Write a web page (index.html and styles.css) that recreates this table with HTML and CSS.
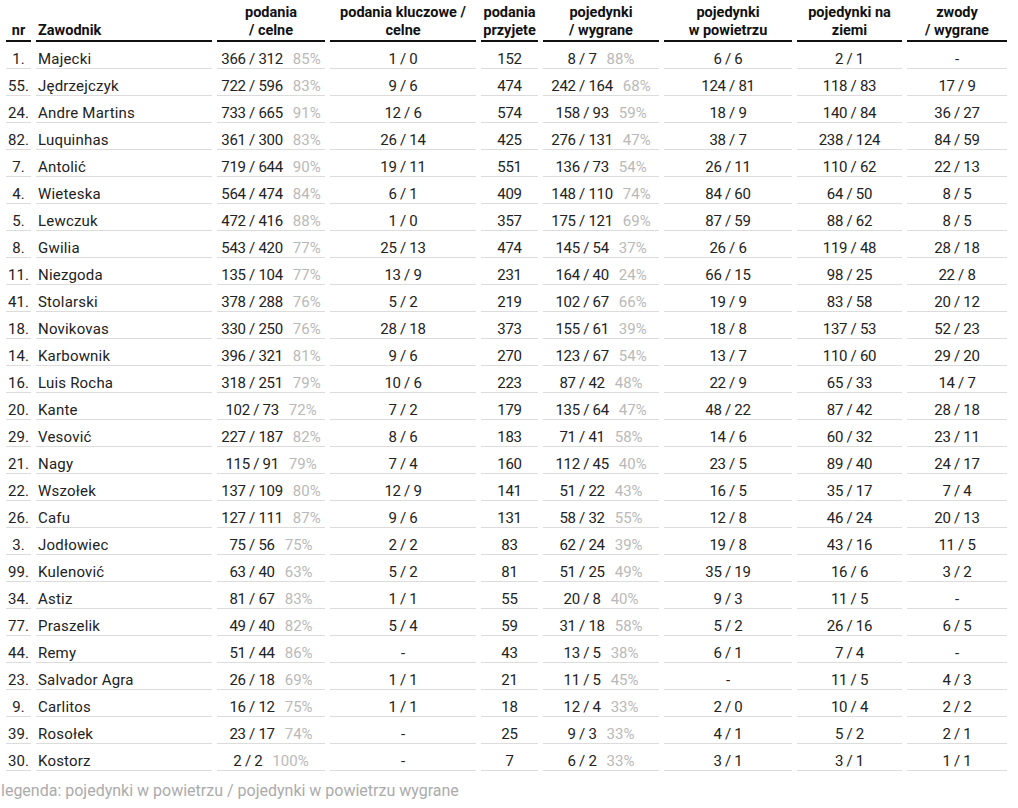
FILE: index.html
```html
<!DOCTYPE html>
<html lang="pl">
<head>
<meta charset="utf-8">
<title>Statystyki zawodników</title>
<link rel="stylesheet" href="styles.css">
</head>
<body>
<div class="page">
<table class="stats">
<colgroup>
<col class="c-nr"><col class="c-name"><col class="c-pass"><col class="c-key"><col class="c-rec"><col class="c-duel"><col class="c-air"><col class="c-ground"><col class="c-drib">
</colgroup>
<thead>
<tr>
<th class="nr">nr</th>
<th class="name">Zawodnik</th>
<th>podania<br>/ celne</th>
<th>podania kluczowe /<br>celne</th>
<th>podania<br>przyjete</th>
<th>pojedynki<br>/ wygrane</th>
<th>pojedynki<br>w powietrzu</th>
<th>pojedynki na<br>ziemi</th>
<th>zwody<br>/ wygrane</th>
</tr>
</thead>
<tbody>
<tr><td class="nr">1.</td><td class="name">Majecki</td><td>366 / 312<span class="pct">85%</span></td><td>1 / 0</td><td>152</td><td>8 / 7<span class="pct">88%</span></td><td>6 / 6</td><td>2 / 1</td><td>-</td></tr>
<tr><td class="nr">55.</td><td class="name">Jędrzejczyk</td><td>722 / 596<span class="pct">83%</span></td><td>9 / 6</td><td>474</td><td>242 / 164<span class="pct">68%</span></td><td>124 / 81</td><td>118 / 83</td><td>17 / 9</td></tr>
<tr><td class="nr">24.</td><td class="name">Andre Martins</td><td>733 / 665<span class="pct">91%</span></td><td>12 / 6</td><td>574</td><td>158 / 93<span class="pct">59%</span></td><td>18 / 9</td><td>140 / 84</td><td>36 / 27</td></tr>
<tr><td class="nr">82.</td><td class="name">Luquinhas</td><td>361 / 300<span class="pct">83%</span></td><td>26 / 14</td><td>425</td><td>276 / 131<span class="pct">47%</span></td><td>38 / 7</td><td>238 / 124</td><td>84 / 59</td></tr>
<tr><td class="nr">7.</td><td class="name">Antolić</td><td>719 / 644<span class="pct">90%</span></td><td>19 / 11</td><td>551</td><td>136 / 73<span class="pct">54%</span></td><td>26 / 11</td><td>110 / 62</td><td>22 / 13</td></tr>
<tr><td class="nr">4.</td><td class="name">Wieteska</td><td>564 / 474<span class="pct">84%</span></td><td>6 / 1</td><td>409</td><td>148 / 110<span class="pct">74%</span></td><td>84 / 60</td><td>64 / 50</td><td>8 / 5</td></tr>
<tr><td class="nr">5.</td><td class="name">Lewczuk</td><td>472 / 416<span class="pct">88%</span></td><td>1 / 0</td><td>357</td><td>175 / 121<span class="pct">69%</span></td><td>87 / 59</td><td>88 / 62</td><td>8 / 5</td></tr>
<tr><td class="nr">8.</td><td class="name">Gwilia</td><td>543 / 420<span class="pct">77%</span></td><td>25 / 13</td><td>474</td><td>145 / 54<span class="pct">37%</span></td><td>26 / 6</td><td>119 / 48</td><td>28 / 18</td></tr>
<tr><td class="nr">11.</td><td class="name">Niezgoda</td><td>135 / 104<span class="pct">77%</span></td><td>13 / 9</td><td>231</td><td>164 / 40<span class="pct">24%</span></td><td>66 / 15</td><td>98 / 25</td><td>22 / 8</td></tr>
<tr><td class="nr">41.</td><td class="name">Stolarski</td><td>378 / 288<span class="pct">76%</span></td><td>5 / 2</td><td>219</td><td>102 / 67<span class="pct">66%</span></td><td>19 / 9</td><td>83 / 58</td><td>20 / 12</td></tr>
<tr><td class="nr">18.</td><td class="name">Novikovas</td><td>330 / 250<span class="pct">76%</span></td><td>28 / 18</td><td>373</td><td>155 / 61<span class="pct">39%</span></td><td>18 / 8</td><td>137 / 53</td><td>52 / 23</td></tr>
<tr><td class="nr">14.</td><td class="name">Karbownik</td><td>396 / 321<span class="pct">81%</span></td><td>9 / 6</td><td>270</td><td>123 / 67<span class="pct">54%</span></td><td>13 / 7</td><td>110 / 60</td><td>29 / 20</td></tr>
<tr><td class="nr">16.</td><td class="name">Luis Rocha</td><td>318 / 251<span class="pct">79%</span></td><td>10 / 6</td><td>223</td><td>87 / 42<span class="pct">48%</span></td><td>22 / 9</td><td>65 / 33</td><td>14 / 7</td></tr>
<tr><td class="nr">20.</td><td class="name">Kante</td><td>102 / 73<span class="pct">72%</span></td><td>7 / 2</td><td>179</td><td>135 / 64<span class="pct">47%</span></td><td>48 / 22</td><td>87 / 42</td><td>28 / 18</td></tr>
<tr><td class="nr">29.</td><td class="name">Vesović</td><td>227 / 187<span class="pct">82%</span></td><td>8 / 6</td><td>183</td><td>71 / 41<span class="pct">58%</span></td><td>14 / 6</td><td>60 / 32</td><td>23 / 11</td></tr>
<tr><td class="nr">21.</td><td class="name">Nagy</td><td>115 / 91<span class="pct">79%</span></td><td>7 / 4</td><td>160</td><td>112 / 45<span class="pct">40%</span></td><td>23 / 5</td><td>89 / 40</td><td>24 / 17</td></tr>
<tr><td class="nr">22.</td><td class="name">Wszołek</td><td>137 / 109<span class="pct">80%</span></td><td>12 / 9</td><td>141</td><td>51 / 22<span class="pct">43%</span></td><td>16 / 5</td><td>35 / 17</td><td>7 / 4</td></tr>
<tr><td class="nr">26.</td><td class="name">Cafu</td><td>127 / 111<span class="pct">87%</span></td><td>9 / 6</td><td>131</td><td>58 / 32<span class="pct">55%</span></td><td>12 / 8</td><td>46 / 24</td><td>20 / 13</td></tr>
<tr><td class="nr">3.</td><td class="name">Jodłowiec</td><td>75 / 56<span class="pct">75%</span></td><td>2 / 2</td><td>83</td><td>62 / 24<span class="pct">39%</span></td><td>19 / 8</td><td>43 / 16</td><td>11 / 5</td></tr>
<tr><td class="nr">99.</td><td class="name">Kulenović</td><td>63 / 40<span class="pct">63%</span></td><td>5 / 2</td><td>81</td><td>51 / 25<span class="pct">49%</span></td><td>35 / 19</td><td>16 / 6</td><td>3 / 2</td></tr>
<tr><td class="nr">34.</td><td class="name">Astiz</td><td>81 / 67<span class="pct">83%</span></td><td>1 / 1</td><td>55</td><td>20 / 8<span class="pct">40%</span></td><td>9 / 3</td><td>11 / 5</td><td>-</td></tr>
<tr><td class="nr">77.</td><td class="name">Praszelik</td><td>49 / 40<span class="pct">82%</span></td><td>5 / 4</td><td>59</td><td>31 / 18<span class="pct">58%</span></td><td>5 / 2</td><td>26 / 16</td><td>6 / 5</td></tr>
<tr><td class="nr">44.</td><td class="name">Remy</td><td>51 / 44<span class="pct">86%</span></td><td>-</td><td>43</td><td>13 / 5<span class="pct">38%</span></td><td>6 / 1</td><td>7 / 4</td><td>-</td></tr>
<tr><td class="nr">23.</td><td class="name">Salvador Agra</td><td>26 / 18<span class="pct">69%</span></td><td>1 / 1</td><td>21</td><td>11 / 5<span class="pct">45%</span></td><td>-</td><td>11 / 5</td><td>4 / 3</td></tr>
<tr><td class="nr">9.</td><td class="name">Carlitos</td><td>16 / 12<span class="pct">75%</span></td><td>1 / 1</td><td>18</td><td>12 / 4<span class="pct">33%</span></td><td>2 / 0</td><td>10 / 4</td><td>2 / 2</td></tr>
<tr><td class="nr">39.</td><td class="name">Rosołek</td><td>23 / 17<span class="pct">74%</span></td><td>-</td><td>25</td><td>9 / 3<span class="pct">33%</span></td><td>4 / 1</td><td>5 / 2</td><td>2 / 1</td></tr>
<tr><td class="nr">30.</td><td class="name">Kostorz</td><td>2 / 2<span class="pct">100%</span></td><td>-</td><td>7</td><td>6 / 2<span class="pct">33%</span></td><td>3 / 1</td><td>3 / 1</td><td>1 / 1</td></tr>
</tbody>
</table>
<p class="legend">legenda: pojedynki w powietrzu / pojedynki w powietrzu wygrane</p>
</div>
</body>
</html>
```
FILE: styles.css
```css
html, body {
  margin: 0;
  padding: 0;
  background: #ffffff;
}

body {
  font-family: Roboto, "Liberation Sans", sans-serif;
  color: #222222;
}

.page {
  padding: 4px 0 0 1px;
}

.stats {
  border-collapse: separate;
  border-spacing: 5px 0;
  table-layout: fixed;
  width: 1011px;
  margin: 0;
}

.c-nr { width: 25px; }
.c-name { width: 176px; }
.c-pass { width: 108px; }
.c-key { width: 146px; }
.c-rec { width: 57px; }
.c-duel { width: 116px; }
.c-air { width: 128px; }
.c-ground { width: 105px; }
.c-drib { width: 100px; }

.stats th {
  font-size: 14.5px;
  font-weight: 700;
  line-height: 18px;
  color: #111111;
  text-align: center;
  vertical-align: bottom;
  padding: 0;
  border-bottom: 2px solid #111111;
  white-space: nowrap;
}

.stats td {
  font-size: 15px;
  line-height: 18px;
  text-align: center;
  vertical-align: bottom;
  padding: 8px 0 0 0;
  border-bottom: 1px solid #dcdcdc;
  white-space: nowrap;
  letter-spacing: -0.3px;
}

.stats .nr {
  text-align: center;
}

.stats td.nr {
  letter-spacing: 0;
}

.stats .name {
  text-align: left;
  padding-left: 2px;
}

.stats td.name {
  letter-spacing: 0.2px;
}

.pct {
  color: #b9b9b9;
  margin-left: 10px;
  letter-spacing: 0;
}

.legend {
  margin: 11px 0 0 0;
  font-size: 16px;
  line-height: 18px;
  color: #ababab;
}
```
